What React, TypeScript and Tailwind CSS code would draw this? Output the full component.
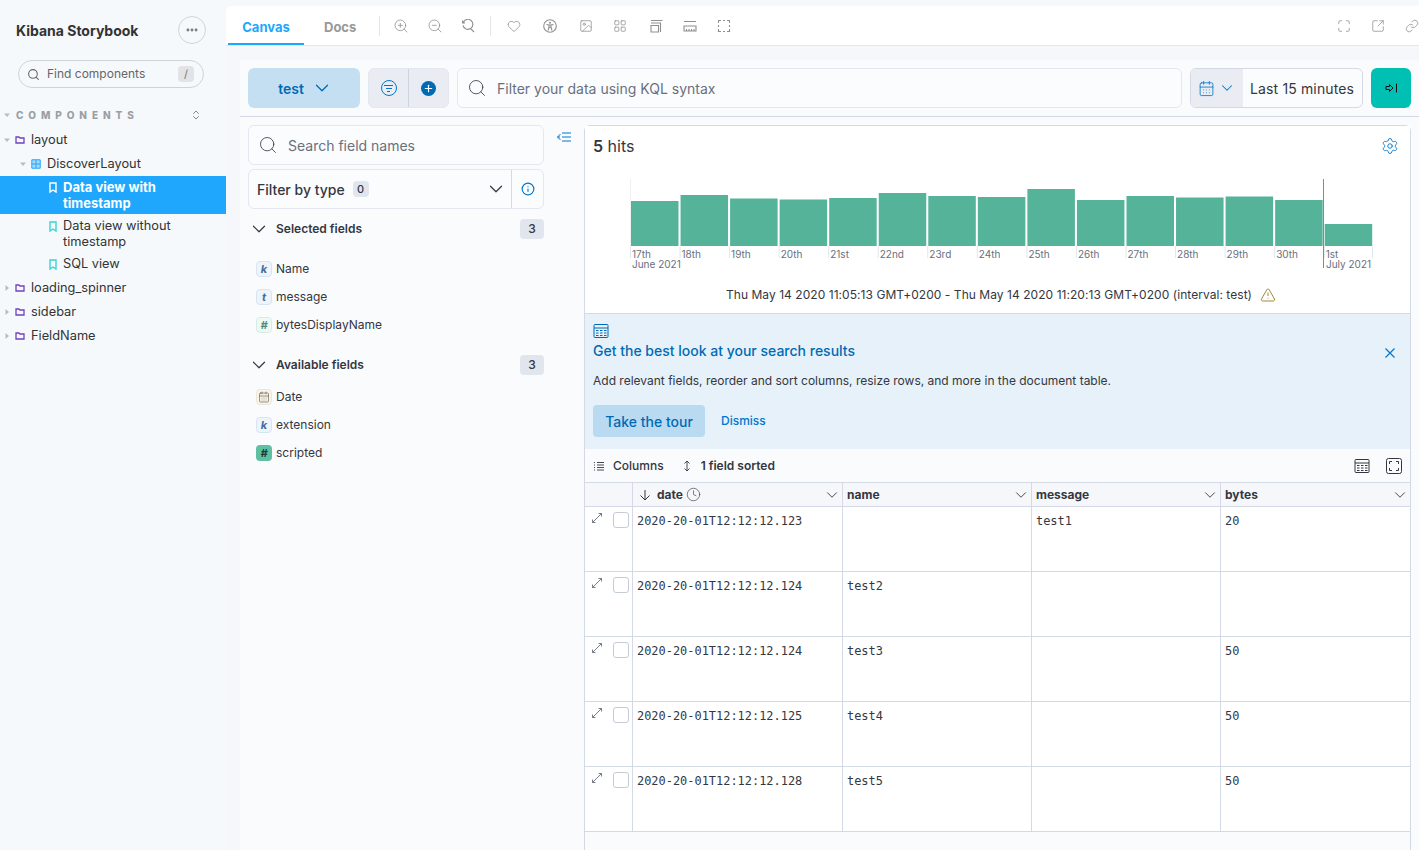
import React from "react";
import {
  CalendarDays,
  ChevronDown,
  ChevronsUpDown,
  Clock,
  Ellipsis,
  Heart,
  Image,
  Info,
  LayoutGrid,
  Link,
  Maximize,
  Plus,
  Search,
  Settings,
  SquareArrowOutUpRight,
  TriangleAlert,
  ZoomIn,
  ZoomOut,
} from "lucide-react";

const Folder = () => (
  <svg width="10" height="10" viewBox="0 0 10 10" fill="none" stroke="#6f42c1" strokeWidth="1.3" className="shrink-0">
    <path d="M1 2h3l1 1h4v5H1z" />
  </svg>
);

const Bookmark = ({ color }: { color: string }) => (
  <svg width="10" height="11" viewBox="0 0 10 11" fill="none" stroke={color} strokeWidth="1.4" className="shrink-0">
    <path d="M2 1h6v9L5 8l-3 2z" />
  </svg>
);

const Arrow = ({ open }: { open?: boolean }) => (
  <svg width="6" height="6" viewBox="0 0 6 6" className="shrink-0" fill="#b8bcc2">
    {open ? <path d="M0 1.5h6L3 5z" /> : <path d="M1.5 0v6L5 3z" />}
  </svg>
);

function TreeRow({ label, open }: { label: string; open?: boolean }) {
  return (
    <div className="flex h-6 items-center pl-[4px]">
      <Arrow open={open} />
      <span className="ml-[5px]"><Folder /></span>
      <span className="ml-[6px] text-[12.8px] text-[#333]">{label}</span>
    </div>
  );
}

function Sidebar() {
  return (
    <aside className="w-[226px] shrink-0 bg-[#f6f9fc]">
      <div className="flex h-[60px] items-center justify-between pl-4 pr-5">
        <span className="text-[14px] font-bold text-[#333]">Kibana Storybook</span>
        <div className="flex h-7 w-7 items-center justify-center rounded-full border border-[#d0d3d7] bg-[#f6f9fc]">
          <Ellipsis size={14} strokeWidth={3} color="#73787f" />
        </div>
      </div>
      <div className="ml-[18px] mr-[22px] flex h-7 items-center rounded-full border border-[#cfd3d8] pl-2 pr-[9px]">
        <Search size={13} color="#666" />
        <span className="ml-[7px] flex-1 text-[12px] text-[#666]">Find components</span>
        <span className="flex h-4 w-4 items-center justify-center rounded-sm bg-[#e1e3e6] text-[11px] text-[#777]">/</span>
      </div>
      <div className="mt-[15px] flex h-6 items-center pl-[4px] pr-6">
        <Arrow open />
        <span className="ml-[6px] flex-1 text-[10px] font-extrabold tracking-[0.49em] text-[#9b9fa4]">COMPONENTS</span>
        <ChevronsUpDown size={12} color="#888" />
      </div>
      <div className="mt-px">
        <TreeRow label="layout" open />
      </div>
      <div className="flex h-6 items-center pl-[20px]">
        <Arrow open />
        <span className="ml-[5px]">
          <svg width="10" height="10" viewBox="0 0 10 10" fill="#a9d8fb" stroke="#1ea7fd" strokeWidth="1" className="shrink-0">
            <path d="M.8.8h8.4v8.4H.8zM5 .8v8.4M.8 5h8.4" />
          </svg>
        </span>
        <span className="ml-[6px] text-[12.8px] text-[#333]">DiscoverLayout</span>
      </div>
      <div className="flex h-[38px] items-center bg-[#1ea7fd] pl-12">
        <span className="-mt-[16px]"><Bookmark color="#fff" /></span>
        <span className="ml-[5px] text-[13px] leading-4 font-bold text-white">Data view with<br />timestamp</span>
      </div>
      <div className="mt-1 flex pl-12">
        <span className="mt-[3px]"><Bookmark color="#37d5d3" /></span>
        <span className="ml-[5px] text-[12.8px] leading-4 text-[#333]">Data view without<br />timestamp</span>
      </div>
      <div className="mt-[2px] flex h-6 items-center pl-12">
        <Bookmark color="#37d5d3" />
        <span className="ml-[5px] text-[12.8px] text-[#333]">SQL view</span>
      </div>
      <TreeRow label="loading_spinner" />
      <TreeRow label="sidebar" />
      <TreeRow label="FieldName" />
    </aside>
  );
}

const toolColor = "#8f8f8f";

const ResetZoom = () => (
  <svg width="14" height="14" viewBox="0 0 14 14" fill="none" stroke={toolColor} strokeWidth="1.1">
    <path d="M2.2 3.5A5 5 0 1 1 2 6.5M1.5 1.5v2.4h2.4M9.4 9.4 13 13" />
  </svg>
);
const Outline = () => (
  <svg width="14" height="14" viewBox="0 0 14 14" fill="none" stroke={toolColor} strokeWidth="1.1">
    <path d="M1.5 4V1.5H4M10 1.5h2.500V4M12.500 10v2.500H10M4 12.500H1.500V10M6 1.500h2M6 12.500h2M1.500 6v2M12.500 6v2" />
  </svg>
);
const Frames = () => (
  <svg width="14" height="14" viewBox="0 0 14 14" fill="none" stroke={toolColor} strokeWidth="1.1">
    <path d="M2 6.500h7.500V13H2zM2 4h9.500v9M2 1.500h11.500" />
  </svg>
);
const Ruler = () => (
  <svg width="14" height="14" viewBox="0 0 14 14" fill="none" stroke={toolColor} strokeWidth="1.1">
    <path d="M1 7h12v5H1zM1 2.500h12M3.500 12v-2M6 12v-2M8.500 12v-2M11 12v-2" />
  </svg>
);
const Person = () => (
  <svg width="14" height="14" viewBox="0 0 14 14" fill="none" stroke={toolColor} strokeWidth="1.1">
    <circle cx="7" cy="7" r="6.300" />
    <circle cx="7" cy="3.800" r="1" fill={toolColor} stroke="none" />
    <path d="M3.500 5.500 6 6v2.500L5 11.500M10.500 5.500 8 6v2.500l1 3M6 6h2M6.300 8.500h1.400" />
  </svg>
);

const Divider = () => <div className="h-5 w-px bg-[#e4e6e9]" />;

function Toolbar() {
  return (
    <div className="flex h-10 shrink-0 items-center border-b border-[#e3e6ea] bg-white">
      <div className="ml-[2px] flex h-full w-[76px] items-center justify-center border-b-2 border-[#1ea7fd] pt-[6px] text-[13px] font-bold text-[#1ea7fd]">Canvas</div>
      <div className="ml-5 pt-[4px] text-[13px] font-bold text-[#999]">Docs</div>
      <div className="ml-[23px]"><Divider /></div>
      <div className="ml-[13px] flex w-[82px] items-center justify-between">
        <ZoomIn size={16} color={toolColor} strokeWidth={1.2} />
        <ZoomOut size={16} color={toolColor} strokeWidth={1.2} />
        <ResetZoom />
      </div>
      <div className="ml-[15px]"><Divider /></div>
      <div className="ml-[16px] flex items-center gap-5">
        <Heart size={14} color={toolColor} strokeWidth={1.3} />
        <span className="ml-[2px]"><Person /></span>
        <Image size={14} color={toolColor} strokeWidth={1.3} className="ml-[2px]" />
        <LayoutGrid size={14} color={toolColor} strokeWidth={1.3} />
        <span className="ml-[2px]"><Frames /></span>
        <Ruler />
        <Outline />
      </div>
      <div className="ml-auto flex items-center gap-5">
        <Maximize size={14} color={toolColor} strokeWidth={1.3} />
        <SquareArrowOutUpRight size={14} color={toolColor} strokeWidth={1.3} />
        <Link size={14} color={toolColor} strokeWidth={1.3} />
      </div>
    </div>
  );
}

function TopBar() {
  return (
    <div className="flex h-[57px] items-center gap-2 border-b border-[#d3dae6] px-2">
      <div className="flex h-10 w-[112px] items-center justify-center gap-[7px] rounded-md bg-[#c4dff2] pl-[3px] text-[14px] font-semibold text-[#006bb4]">
        test <ChevronDown size={22} strokeWidth={1.4} />
      </div>
      <div className="flex h-10 w-[81px] rounded-md border border-[#e3e7ef] bg-[#e9edf3]">
        <div className="flex w-10 items-center justify-center border-r border-[#cdd3df]">
          <div className="flex h-4 w-4 flex-col items-center justify-center gap-[2px] rounded-full border border-[#0077cc]">
            <span className="h-px w-[9px] bg-[#0077cc]" />
            <span className="h-px w-[6px] bg-[#0077cc]" />
            <span className="h-px w-[3px] bg-[#0077cc]" />
          </div>
        </div>
        <div className="flex flex-1 items-center justify-center">
          <div className="flex h-[15px] w-[15px] items-center justify-center rounded-full bg-[#006bb4]">
            <Plus size={11} color="#fff" strokeWidth={2.5} />
          </div>
        </div>
      </div>
      <div className="flex h-10 flex-1 items-center rounded-md border border-[#e3e7ef] bg-[#fbfcfd] pl-[9px]">
        <Search size={20} color="#343741" strokeWidth={1} />
        <span className="ml-[10px] text-[14px] text-[#69707d]">Filter your data using KQL syntax</span>
      </div>
      <div className="flex h-10 w-[173px] overflow-hidden rounded-md border border-[#d3dae6] bg-[#fbfcfd]">
        <div className="flex w-[52px] items-center justify-center gap-[3px] bg-[#e9edf3]">
          <CalendarDays size={17} color="#0077cc" strokeWidth={1.2} />
          <ChevronDown size={18} color="#0077cc" strokeWidth={1.4} />
        </div>
        <div className="flex flex-1 items-center pl-[7px] text-[14px] tracking-[0.14px] text-[#343741]">Last 15 minutes</div>
      </div>
      <div className="flex h-10 w-10 items-center justify-center rounded-md bg-[#00bfb3]">
        <svg width="13" height="10" viewBox="0 0 13 10" fill="none" stroke="#111" strokeWidth="1">
          <path d="M1 3.500h3.500V1.500L8 5 4.500 8.500v-2H1zM11.500 .5v9" />
        </svg>
      </div>
    </div>
  );
}

type FieldType = "k" | "t" | "#" | "date" | "scripted";

function FieldIcon({ type }: { type: FieldType }) {
  if (type === "date")
    return (
      <div className="flex h-4 w-4 items-center justify-center rounded-sm border border-[#eee6d6] bg-[#f7f4ec]">
        <CalendarDays size={12} color="#6b5f46" strokeWidth={1.3} />
      </div>
    );
  if (type === "scripted")
    return <div className="flex h-4 w-4 items-center justify-center rounded-sm bg-[#5fbfa3] text-[11px] font-bold italic text-[#1a3c33]">#</div>;
  if (type === "#")
    return <div className="flex h-4 w-4 items-center justify-center rounded-sm border border-[#d5ece5] bg-[#eef8f5] text-[11px] font-bold italic text-[#4d8f7d]">#</div>;
  return <div className="flex h-4 w-4 items-center justify-center rounded-sm border border-[#d6e5f3] bg-[#eef4fa] text-[11px] font-bold italic text-[#3f6f9f]">{type}</div>;
}

function FieldRow({ type, name }: { type: FieldType; name: string }) {
  return (
    <div className="flex h-7 items-center gap-[4px] pl-[8px] text-[12px] text-[#343741]">
      <FieldIcon type={type} />
      {name}
    </div>
  );
}

function FieldHeading({ label }: { label: string }) {
  return (
    <div className="flex h-5 items-center">
      <ChevronDown size={22} color="#343741" strokeWidth={1.3} />
      <span className="ml-[6px] flex-1 text-[12px] font-semibold text-[#343741]">{label}</span>
      <span className="flex h-5 w-6 items-center justify-center rounded-sm bg-[#e0e5ee] text-[12px] font-medium text-[#343741]">3</span>
    </div>
  );
}

function FieldList() {
  return (
    <div className="w-[296px] shrink-0">
      <div className="flex h-10 items-center rounded-md border border-[#e3e7ef] bg-[#fbfcfd] pl-[9px]">
        <Search size={20} color="#343741" strokeWidth={1} />
        <span className="ml-[10px] text-[14px] text-[#69707d]">Search field names</span>
      </div>
      <div className="mt-1 flex h-10 items-center rounded-md border border-[#e3e7ef] bg-[#fbfcfd]">
        <span className="ml-2 text-[14px] font-medium text-[#343741]">Filter by type</span>
        <span className="ml-[8px] flex h-4 w-4 items-center justify-center rounded-sm bg-[#e0e5ee] text-[11px] font-medium text-[#343741]">0</span>
        <ChevronDown size={22} color="#343741" strokeWidth={1.3} className="ml-auto mr-[4px]" />
        <div className="flex h-full w-8 items-center justify-center border-l border-[#d3dae6]">
          <Info size={14} color="#0077cc" />
        </div>
      </div>
      <div className="mt-[10px]"><FieldHeading label="Selected fields" /></div>
      <div className="mt-[16px]">
        <FieldRow type="k" name="Name" />
        <FieldRow type="t" name="message" />
        <FieldRow type="#" name="bytesDisplayName" />
      </div>
      <div className="mt-[16px]"><FieldHeading label="Available fields" /></div>
      <div className="mt-[8px]">
        <FieldRow type="date" name="Date" />
        <FieldRow type="k" name="extension" />
        <FieldRow type="scripted" name="scripted" />
      </div>
    </div>
  );
}

// bar tops, from the baseline at y=76 inside the chart
const bars = [31, 25, 28.5, 29.5, 28, 23, 26, 27, 19, 30, 26, 27.5, 26.5, 30, 54];
const days = ["17th", "18th", "19th", "20th", "21st", "22nd", "23rd", "24th", "25th", "26th", "27th", "28th", "29th", "30th", "1st"];

function Histogram() {
  return (
    <svg width="826" height="100" viewBox="0 0 826 100" className="mt-[4px] block font-['Inter']">
      <line x1="45.500" x2="45.500" y1="9" y2="88" stroke="#eef0f3" />
      {bars.map((top, i) => (
        <g key={days[i]}>
          <rect x={46 + i * 49.55} y={top} width={47.5} height={76 - top} fill="#54b399" />
          <line x1={45.500 + i * 49.55} x2={45.500 + i * 49.55} y1={76} y2={88} stroke="#e3e6ea" />
          <text x={47 + i * 49.55} y={88} fontSize="10" fill="#69707d">{days[i]}</text>
        </g>
      ))}
      <line x1="787.500" x2="787.500" y1="76" y2="88" stroke="#e3e6ea" />
      <line x1="738.500" x2="738.500" y1="9" y2="98" stroke="#888" />
      <text x="47" y="98" fontSize="10" fill="#69707d">June 2021</text>
      <text x="741" y="98" fontSize="10" fill="#69707d">July 2021</text>
    </svg>
  );
}

const cols = ["w-[47px]", "w-[210px]", "w-[189px]", "w-[189px]", "flex-1"];
const rows = [
  { date: "2020-20-01T12:12:12.123", name: "", message: "test1", bytes: "20" },
  { date: "2020-20-01T12:12:12.124", name: "test2", message: "", bytes: "" },
  { date: "2020-20-01T12:12:12.124", name: "test3", message: "", bytes: "50" },
  { date: "2020-20-01T12:12:12.125", name: "test4", message: "", bytes: "50" },
  { date: "2020-20-01T12:12:12.128", name: "test5", message: "", bytes: "50" },
];

function HeaderCell({ label, width }: { label: string; width: string }) {
  return (
    <div className={`flex items-center border-l border-[#d3dae6] pl-1 pr-px ${width}`}>
      <span className="text-[12px] font-bold text-[#343741]">{label}</span>
      <ChevronDown size={18} color="#343741" strokeWidth={1.2} className="ml-auto" />
    </div>
  );
}

function DataTable() {
  return (
    <div className="text-[#343741]">
      <div className="flex h-[25px] border-y border-[#d3dae6] bg-[#f5f7fa]">
        <div className={cols[0]} />
        <div className={`flex items-center border-l border-[#d3dae6] pl-[5px] pr-px ${cols[1]}`}>
          <svg width="14" height="14" viewBox="0 0 14 14" fill="none" stroke="#343741" strokeWidth="1">
            <path d="M7 2v10M2.500 7.500 7 12l4.500-4.500" />
          </svg>
          <span className="ml-[5px] text-[12px] font-bold">date</span>
          <Clock size={15} strokeWidth={1} className="ml-[3px]" />
          <ChevronDown size={18} strokeWidth={1.2} className="ml-auto" />
        </div>
        <HeaderCell label="name" width={cols[2]} />
        <HeaderCell label="message" width={cols[3]} />
        <HeaderCell label="bytes" width={cols[4]} />
      </div>
      {rows.map((row, i) => (
        <div key={i} className="flex h-[65px] border-b border-[#d3dae6] bg-white font-['DejaVu_Sans_Mono',monospace] text-[11.950px]">
          <div className={`flex items-start pl-[6px] pt-[5px] ${cols[0]}`}>
            <svg width="12" height="12" viewBox="0 0 12 12" fill="none" stroke="#69707d" strokeWidth="0.900">
              <path d="M1.500 10.500 10.500 1.500M7.500 1.500h3v3M1.500 7.500v3h3" />
            </svg>
            <div className="ml-[10px] h-4 w-4 rounded-[3px] border border-[#c6ccd6]" />
          </div>
          <div className={`border-l border-[#d3dae6] pl-1 pt-[6px] ${cols[1]}`}>{row.date}</div>
          <div className={`border-l border-[#d3dae6] pl-1 pt-[6px] ${cols[2]}`}>{row.name}</div>
          <div className={`border-l border-[#d3dae6] pl-1 pt-[6px] ${cols[3]}`}>{row.message}</div>
          <div className={`border-l border-[#d3dae6] pl-1 pt-[6px] ${cols[4]}`}>{row.bytes}</div>
        </div>
      ))}
    </div>
  );
}

function TableIcon({ color }: { color: string }) {
  return (
    <svg width="16" height="16" viewBox="0 0 16 16" fill="none" stroke={color} strokeWidth="1">
      <path d="M1 2.500A1 1 0 0 1 2 1.500h12a1 1 0 0 1 1 1v11a1 1 0 0 1-1 1H2a1 1 0 0 1-1-1zM1 5h14" />
      <path d="M3 7.500h2.500M7 7.500h2.500M11 7.500h2.500M3 10h2.500M7 10h2.500M11 10h2.500M3 12.500h2.500M7 12.500h2.500M11 12.500h2.500" />
    </svg>
  );
}

function ResultPanel() {
  return (
    <div className="ml-[12px] h-[800px] w-[827px] shrink-0 rounded-t-md border border-[#d3dae6] bg-[#fafbfd]">
      <div className="bg-white">
        <div className="flex h-[40px] items-center pl-2 pr-[11px]">
          <span className="text-[16px] text-[#343741]"><span className="font-semibold">5</span> hits</span>
          <Settings size={18} color="#0077cc" strokeWidth={1.2} className="ml-auto" />
        </div>
        <Histogram />
        <div className="flex h-[43px] items-center justify-center gap-[8px] pt-[6px] pl-[7px] text-[12px] tracking-[0.05px] text-[#343741]">
          Thu May 14 2020 11:05:13 GMT+0200 - Thu May 14 2020 11:20:13 GMT+0200 (interval: test)
          <TriangleAlert size={16} color="#8a6a0a" strokeWidth={1.2} />
        </div>
      </div>
      <div className="h-[136px] border-t border-[#d3dae6] bg-[#e6f1fa] px-2 pt-[9px]">
        <TableIcon color="#006bb4" />
        <div className="mt-[3px] flex items-center justify-between pr-[6px]">
          <span className="text-[14px] leading-[18px] font-medium text-[#006bb4]">Get the best look at your search results</span>
          <svg width="12" height="12" viewBox="0 0 12 12" stroke="#0077cc" strokeWidth="1.200" className="mt-[4px]">
            <path d="M1.500 1.500l9 9M10.500 1.500l-9 9" />
          </svg>
        </div>
        <p className="mt-[12px] text-[12px] leading-[17px] text-[#343741]">Add relevant fields, reorder and sort columns, resize rows, and more in the document table.</p>
        <div className="mt-[16px] flex items-center">
          <div className="flex h-8 w-[112px] items-center justify-center rounded-[4px] bg-[#b9daf1] text-[14px] font-medium text-[#006bb4]">Take the tour</div>
          <span className="ml-[16px] text-[12px] font-medium text-[#0077cc]">Dismiss</span>
        </div>
      </div>
      <div className="flex h-[33px] items-center pl-2 pr-[8px] text-[12px] text-[#343741]">
        <svg width="12" height="12" viewBox="0 0 12 12" fill="none" stroke="#343741" strokeWidth="0.900">
          <path d="M1 2.500h1M1 5h1M1 7.500h1M1 10h1M4 2.500h7M4 5h7M4 7.500h7M4 10h7" />
        </svg>
        <span className="ml-[8px] font-medium">Columns</span>
        <svg width="12" height="12" viewBox="0 0 12 12" fill="none" stroke="#343741" strokeWidth="0.900" className="ml-[17px]">
          <path d="M6 1v10M3.500 3.500 6 1l2.500 2.500M3.500 8.500 6 11l2.500-2.500" />
        </svg>
        <span className="ml-[8px] font-semibold">1 field sorted</span>
        <span className="ml-auto"><TableIcon color="#343741" /></span>
        <svg width="16" height="16" viewBox="0 0 16 16" fill="none" stroke="#343741" strokeWidth="1" className="ml-[16px]">
          <path d="M2.500 .5h11a2 2 0 0 1 2 2v11a2 2 0 0 1-2 2h-11a2 2 0 0 1-2-2v-11a2 2 0 0 1 2-2zM3.500 6V3.500H6M10 3.500h2.500V6M12.500 10v2.500H10M6 12.500H3.500V10" />
        </svg>
      </div>
      <DataTable />
    </div>
  );
}

export default function App() {
  return (
    <div className="flex h-[850px] overflow-hidden bg-[#f6f9fc] font-['Inter',sans-serif]">
      <Sidebar />
      <main className="mt-[6px] flex min-w-0 flex-1 flex-col overflow-hidden rounded-tl-md bg-[#f5f7fa]">
        <Toolbar />
        <div className="ml-[14px] mt-[14px] flex-1 bg-[#fafbfd]">
          <TopBar />
          <div className="flex pl-2 pt-2">
            <FieldList />
            <svg width="16" height="12" viewBox="0 0 16 12" fill="none" stroke="#0077cc" strokeWidth="1" className="ml-3 mt-[6px] shrink-0">
              <path d="M6 6h9M6 2h9M6 10h9M4.500 3 1.500 6l3 3M1.500 6H4" />
            </svg>
            <ResultPanel />
          </div>
        </div>
      </main>
    </div>
  );
}
